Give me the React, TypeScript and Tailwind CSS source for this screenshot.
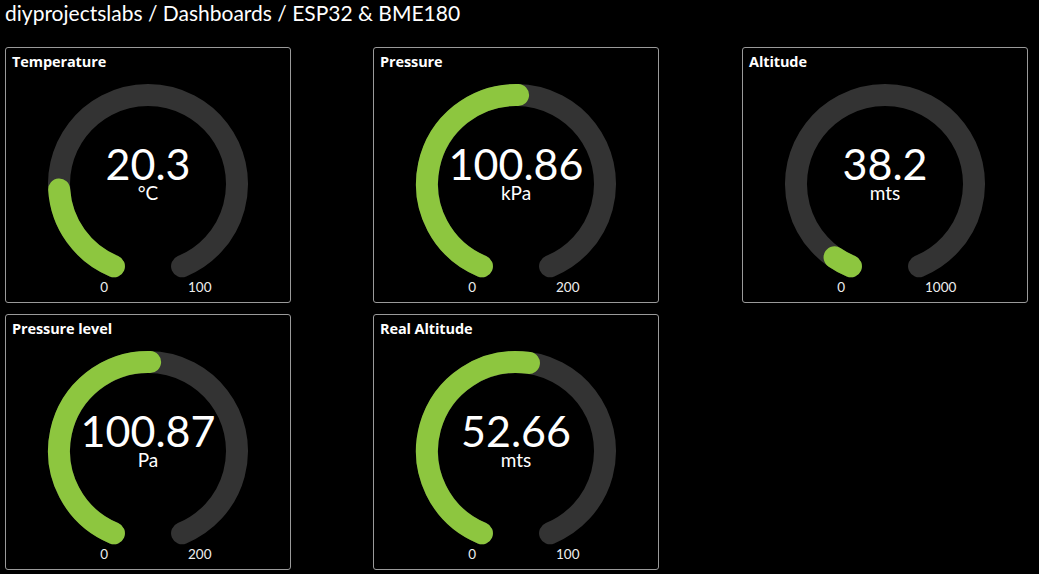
import React from "react";

type G = { title: string; value: string; num: number; unit: string; min: number; max: number };

const gauges: G[] = [
  { title: "Temperature", value: "20.3", num: 20.3, unit: "°C", min: 0, max: 100 },
  { title: "Pressure", value: "100.86", num: 100.86, unit: "kPa", min: 0, max: 200 },
  { title: "Altitude", value: "38.2", num: 38.2, unit: "mts", min: 0, max: 1000 },
  { title: "Pressure level", value: "100.87", num: 100.87, unit: "Pa", min: 0, max: 200 },
  { title: "Real Altitude", value: "52.66", num: 52.66, unit: "mts", min: 0, max: 100 },
];

const CX = 142;
const CY = 112;
const R = 89;
const START = 202.5;
const SWEEP = 315;

function pt(deg: number) {
  const a = (deg * Math.PI) / 180;
  return [CX + R * Math.sin(a), CY - R * Math.cos(a)];
}

function arc(from: number, sweep: number) {
  const [x1, y1] = pt(from);
  const [x2, y2] = pt(from + sweep);
  const large = sweep > 180 ? 1 : 0;
  return `M ${x1.toFixed(2)} ${y1.toFixed(2)} A ${R} ${R} 0 ${large} 1 ${x2.toFixed(2)} ${y2.toFixed(2)}`;
}

function Gauge({ g }: { g: G }) {
  const frac = Math.max(0, Math.min(1, (g.num - g.min) / (g.max - g.min)));
  return (
    <div className="w-[286px] h-[256px] border border-[#9a9a9a] rounded-[3px] flex flex-col">
      <div className="h-[24px] pl-[6px] pt-[5px] text-[14.5px] leading-[18px] font-bold text-white font-['Open_Sans',sans-serif] tracking-[-0.1px]">
        {g.title}
      </div>
      <svg width="284" height="230" viewBox="0 0 284 230" className="block">
        <path d={arc(START, SWEEP)} fill="none" stroke="#333333" strokeWidth="22" strokeLinecap="round" />
        <path d={arc(START, SWEEP * frac)} fill="none" stroke="#8dc63f" strokeWidth="22" strokeLinecap="round" />
        <text x={CX} y={108} textAnchor="middle" fill="#ffffff" fontSize="43" fontFamily="Lato, sans-serif">
          {g.value}
        </text>
        <text x={CX} y={128} textAnchor="middle" fill="#ffffff" fontSize="19" fontFamily="Lato, sans-serif">
          {g.unit}
        </text>
        <text x={CX - 40} y={220} textAnchor="end" fill="#eeeeee" fontSize="13.5" fontFamily="Lato, sans-serif">
          {g.min}
        </text>
        <text x={CX + 40} y={220} textAnchor="start" fill="#eeeeee" fontSize="13.5" fontFamily="Lato, sans-serif">
          {g.max}
        </text>
      </svg>
    </div>
  );
}

export default function App() {
  return (
    <div className="w-[1039px] h-[574px] bg-black overflow-hidden" style={{ fontFamily: "Lato, sans-serif" }}>
      <div className="pl-[5px] pt-[0px] h-[47px] text-[21px] leading-[25px] text-white font-['Lato',sans-serif]">
        diyprojectslabs / Dashboards / ESP32 &amp; BME180
      </div>
      <div className="pl-[5px] grid grid-cols-[286px_287px_286px] gap-x-[82px] gap-y-[11px]">
        {gauges.map((g) => (
          <Gauge key={g.title} g={g} />
        ))}
      </div>
    </div>
  );
}
